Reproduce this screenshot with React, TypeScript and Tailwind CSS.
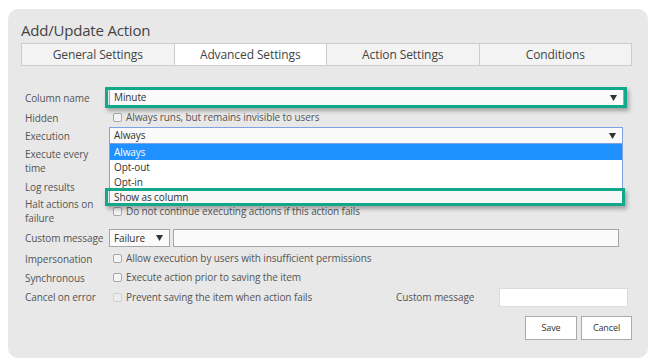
import React from "react";

const font = { fontFamily: '"Open Sans", "Noto Sans", Arial, sans-serif' };

const tabs = ["General Settings", "Advanced Settings", "Action Settings", "Conditions"];

function Arrow() {
  return (
    <svg width="7" height="6" viewBox="0 0 7 6" className="shrink-0">
      <path d="M0 0 H7 L3.5 6 Z" fill="#333" />
    </svg>
  );
}

function Checkbox({ disabled }: { disabled?: boolean }) {
  return (
    <span
      className={`ml-[4px] mr-[4px] inline-block h-[9px] w-[9px] shrink-0 rounded-[2px] border ${
        disabled ? "border-[#d0d0d0] bg-[#ececec]" : "border-[#a9a9a9] bg-[#f4f4f4]"
      }`}
    />
  );
}

function Row({ label, h, children }: { label: React.ReactNode; h: string; children?: React.ReactNode }) {
  return (
    <div className={`flex items-center ${h}`}>
      <div className="w-[84px] shrink-0 pr-[4px] leading-[14px]">{label}</div>
      <div className="flex min-w-0 flex-1 items-center">{children}</div>
    </div>
  );
}

export default function App() {
  return (
    <div className="min-h-screen bg-white pl-[8px] pt-[9px] text-[10px] tracking-[-0.1px] text-[#555]" style={font}>
      <div className="h-[349px] w-[640px] rounded-[10px] bg-[#e8e8e8] pl-[13px] pr-[16px] pt-[11px]">
        <h1 className="text-[15px] leading-[20px] tracking-[-0.2px] text-[#444]">Add/Update Action</h1>

        <div className="mt-[3px] flex h-[23px] border-l border-[#cdcdcd]">
          {tabs.map((t) => (
            <div
              key={t}
              className={`flex flex-1 items-center justify-center border-y border-r border-[#cdcdcd] text-[12px] tracking-[-0.1px] text-[#444] ${
                t === "Advanced Settings" ? "bg-white" : "bg-[#f3f3f3]"
              }`}
            >
              {t}
            </div>
          ))}
        </div>

        <div className="relative mt-[21px] pl-[4px]">
          <Row label="Column name" h="h-[21px]">
            <div className="flex h-[17px] w-[515px] items-center justify-between border border-[#a6a6a6] bg-[#fafafa] pl-[4px] pr-[6px] text-[#333]">
              <span>Minute</span>
              <Arrow />
            </div>
          </Row>
          <Row label="Hidden" h="h-[19px]">
            <Checkbox />
            <span>Always runs, but remains invisible to users</span>
          </Row>
          <Row label="Execution" h="h-[17px]">
            <div className="flex h-[17px] w-[514px] items-center justify-between border border-[#7ea2e2] bg-[#fafafa] pl-[4px] pr-[6px] text-[#333]">
              <span>Always</span>
              <Arrow />
            </div>
          </Row>
          <Row label="Execute every time" h="h-[34px]" />
          <Row label="Log results" h="h-[17px]" />
          <Row label="Halt actions on failure" h="h-[32px]">
            <Checkbox />
            <span>Do not continue executing actions if this action fails</span>
          </Row>
          <Row label="Custom message" h="h-[22px]">
            <div className="flex h-[18px] w-[61px] items-center justify-between border border-[#a6a6a6] bg-[#fafafa] pl-[4px] pr-[6px] text-[#333]">
              <span>Failure</span>
              <Arrow />
            </div>
            <div className="ml-[3px] h-[18px] w-[446px] border border-[#a6a6a6] bg-[#fafafa]" />
          </Row>
          <Row label="Impersonation" h="h-[19px]">
            <Checkbox />
            <span>Allow execution by users with insufficient permissions</span>
          </Row>
          <Row label="Synchronous" h="h-[19px]">
            <Checkbox />
            <span>Execute action prior to saving the item</span>
          </Row>
          <Row label="Cancel on error" h="h-[20px]">
            <Checkbox disabled />
            <span className="w-[270px]">Prevent saving the item when action fails</span>
            <span className="w-[103px]">Custom message</span>
            <div className="h-[19px] w-[129px] border border-[#dcdcdc] bg-white" />
          </Row>

          <div className="mt-[9px] flex justify-end gap-[4px] text-[9px] text-[#333]">
            <button className="h-[24px] w-[52px] border border-[#ababab] bg-white">Save</button>
            <button className="h-[24px] w-[51px] border border-[#ababab] bg-white">Cancel</button>
          </div>

          {/* open dropdown list */}
          <div className="absolute left-[88px] top-[57px] w-[514px] border-x border-[#7ea2e2] bg-white text-[#333]">
            <div className="flex h-[16px] items-center bg-[#1e90ff] pl-[4px] text-white">Always</div>
            <div className="flex h-[15px] items-center pl-[4px]">Opt-out</div>
            <div className="flex h-[15px] items-center pl-[4px]">Opt-in</div>
            <div className="flex h-[15px] items-center bg-[#f7f7f7] pl-[4px]">Show as column</div>
          </div>

          {/* highlight frames */}
          <div className="pointer-events-none absolute left-[84px] top-0 h-[21px] w-[522px] border-[3px] border-[#12a88a] shadow-[2px_3px_4px_rgba(0,0,0,0.3)]" />
          <div className="pointer-events-none absolute left-[84px] top-[101px] h-[18px] w-[520px] border-[3px] border-[#12a88a] shadow-[2px_3px_4px_rgba(0,0,0,0.3)]" />
        </div>
      </div>
    </div>
  );
}
